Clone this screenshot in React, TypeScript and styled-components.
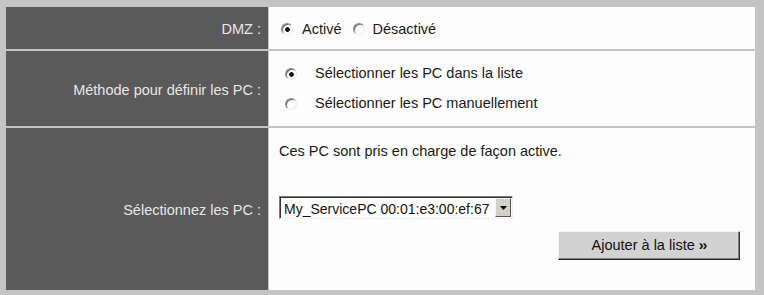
import React from "react";
import styled, { createGlobalStyle } from "styled-components";

const Global = createGlobalStyle`
  html, body { margin: 0; padding: 0; background: #c4c4c4; }
  body { font-family: "Liberation Sans", Arial, sans-serif; }
`;

const Frame = styled.div`
  width: 764px;
  height: 295px;
  box-sizing: border-box;
  padding: 7px 9px 5px 6px;
  background: #c4c4c4;
  display: grid;
  grid-template-columns: 262px 1fr;
  grid-template-rows: 42px 75px 1fr;
  column-gap: 1px;
  row-gap: 2px;
`;

const Label = styled.div`
  background: #5a5a5a;
  color: #e6e6e6;
  font-size: 14.5px;
  display: flex;
  align-items: center;
  justify-content: flex-end;
  padding: 2px 7px 0 0;
`;

const Cell = styled.div<{ $top?: boolean }>`
  background: #fdfdfd;
  color: #1a1a1a;
  font-size: 14.5px;
  display: flex;
  flex-direction: column;
  justify-content: ${(p) => (p.$top ? "flex-start" : "center")};
  padding-left: ${(p) => (p.$top ? 10 : 12)}px;
`;

const Inline = styled.div`
  display: flex;
  align-items: center;
  padding-top: 2px;
`;

const Stack = styled.div`
  display: flex;
  flex-direction: column;
  gap: 13px;
  padding-left: 4px;
`;

const Choice = styled.label<{ $gap: number; $after?: number }>`
  display: flex;
  align-items: center;
  gap: ${(p) => p.$gap}px;
  margin-right: ${(p) => p.$after || 0}px;
  line-height: 17px;
`;

const Radio = styled.input.attrs({ type: "radio" })`
  appearance: none;
  margin: 0;
  width: 12px;
  height: 12px;
  border-radius: 50%;
  box-sizing: border-box;
  border: 1px solid;
  border-color: #8a8a8a #eaeaea #eaeaea #8a8a8a;
  box-shadow: inset 1px 1px 0 #6a6a6a;
  background: #fff;
  &:checked {
    background: radial-gradient(circle at 55% 55%, #111 0 2px, #fff 2.6px);
  }
`;

const Info = styled.div`
  margin-top: 15px;
`;

const SelectRow = styled.div`
  margin-top: 37px;
  display: flex;
`;

const SelectBox = styled.div`
  display: flex;
  align-items: stretch;
  height: 23px;
  box-sizing: border-box;
  border: 1px solid;
  border-color: #7a7a7a #f0f0f0 #f0f0f0 #7a7a7a;
  box-shadow: inset 1px 1px 0 #333;
  background: #fff;
`;

const NativeSelect = styled.select`
  appearance: none;
  border: none;
  outline: none;
  background: transparent;
  font-family: "Liberation Sans", Arial, sans-serif;
  font-size: 14px;
  color: #111;
  padding: 1px 1px 0 3px;
  margin: 1px 0 0 1px;
  width: 214px;
`;

const ArrowButton = styled.span`
  width: 16px;
  margin: 1px 1px 1px 0;
  background: #d4d0c8;
  box-sizing: border-box;
  border: 1px solid;
  border-color: #f4f4f4 #555 #555 #f4f4f4;
  display: flex;
  align-items: center;
  justify-content: center;
`;

const ButtonRow = styled.div`
  display: flex;
  justify-content: flex-end;
  margin-top: 12px;
  padding-right: 15px;
`;

const Button = styled.button`
  width: 182px;
  height: 29px;
  background: #d2d2d2;
  font-family: "Liberation Sans", Arial, sans-serif;
  font-size: 14.5px;
  color: #111;
  border: 1px solid;
  border-color: #f4f4f4 #333 #222 #f4f4f4;
  box-shadow: inset -1px -1px 0 #808080;
  padding: 0 0 1px;
  b { font-weight: bold; letter-spacing: -1px; }
`;

export default function App() {
  return (
    <>
      <Global />
      <Frame>
        <Label>DMZ :</Label>
        <Cell>
          <Inline>
            <Choice $gap={9} $after={11}>
              <Radio name="dmz" defaultChecked /> Activé
            </Choice>
            <Choice $gap={8}>
              <Radio name="dmz" /> Désactivé
            </Choice>
          </Inline>
        </Cell>

        <Label>Méthode pour définir les PC :</Label>
        <Cell>
          <Stack>
            <Choice $gap={18}>
              <Radio name="method" defaultChecked /> Sélectionner les PC dans la liste
            </Choice>
            <Choice $gap={18}>
              <Radio name="method" /> Sélectionner les PC manuellement
            </Choice>
          </Stack>
        </Cell>

        <Label>Sélectionnez les PC :</Label>
        <Cell $top>
          <Info>Ces PC sont pris en charge de façon active.</Info>
          <SelectRow>
            <SelectBox>
              <NativeSelect defaultValue="pc">
                <option value="pc">My_ServicePC 00:01:e3:00:ef:67</option>
              </NativeSelect>
              <ArrowButton>
                <svg width="7" height="4" viewBox="0 0 7 4">
                  <path d="M0 0h7L3.5 4z" fill="#000" />
                </svg>
              </ArrowButton>
            </SelectBox>
          </SelectRow>
          <ButtonRow>
            <Button>
              Ajouter à la liste <b>››</b>
            </Button>
          </ButtonRow>
        </Cell>
      </Frame>
    </>
  );
}
